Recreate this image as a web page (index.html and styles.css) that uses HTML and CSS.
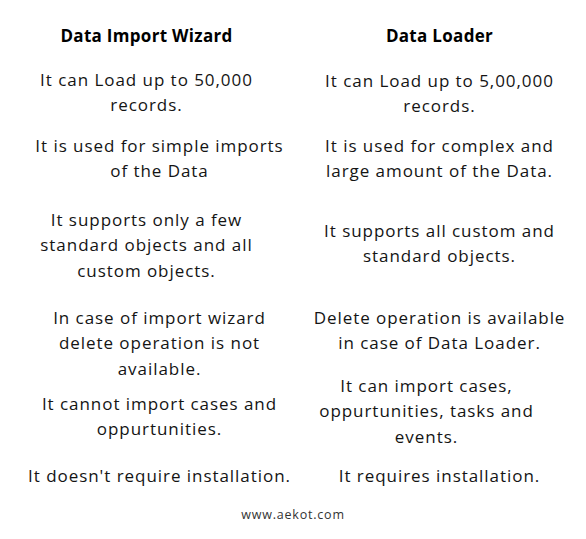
FILE: index.html
```html
<!DOCTYPE html>
<html lang="en">
<head>
<meta charset="utf-8">
<title>Data Import Wizard vs Data Loader</title>
<link rel="stylesheet" href="styles.css">
</head>
<body>
<main class="page">
  <section class="col col-left">
    <h2 class="title">Data Import Wizard</h2>
    <p class="item g-l1">It can Load up to 50,000<br>records.</p>
    <p class="item g-l2 shift-r">It is used for simple imports<br>of the Data</p>
    <p class="item g-l3">It supports only a few<br>standard objects and all<br>custom objects.</p>
    <p class="item g-l4 shift-r">In case of import wizard<br>delete operation is not<br>available.</p>
    <p class="item g-l5 shift-r">It cannot import cases and<br>oppurtunities.</p>
    <p class="item g-l6 shift-r">It doesn't require installation.</p>
  </section>
  <section class="col col-right">
    <h2 class="title">Data Loader</h2>
    <p class="item g-r1">It can Load up to 5,00,000<br>records.</p>
    <p class="item g-r2">It is used for complex and<br>large amount of the Data.</p>
    <p class="item g-r3">It supports all custom and<br>standard objects.</p>
    <p class="item g-r4">Delete operation is available<br>in case of Data Loader.</p>
    <p class="item g-r5 shift-l">It can import cases,<br>oppurtunities, tasks and<br>events.</p>
    <p class="item g-r6">It requires installation.</p>
  </section>
  <footer class="footer">www.aekot.com</footer>
</main>
</body>
</html>
```
FILE: styles.css
```css
* { box-sizing: border-box; }
html, body {
  margin: 0;
  padding: 0;
  background: #ffffff;
}
body {
  width: 586px;
  height: 539px;
  overflow: hidden;
  font-family: "Open Sans", "Noto Sans", sans-serif;
  color: #141414;
}
.page {
  display: grid;
  grid-template-columns: 293px 293px;
  grid-template-rows: auto auto;
  padding-top: 23px;
}
.col {
  display: flex;
  flex-direction: column;
  align-items: center;
  text-align: center;
}
.title {
  margin: 0;
  font-size: 17px;
  line-height: 26px;
  font-weight: 700;
  letter-spacing: 0.3px;
  color: #000;
}
.item {
  margin: 0;
  font-size: 17px;
  line-height: 25.5px;
  letter-spacing: 0.95px;
  white-space: nowrap;
}
.shift-r { padding-left: 26px; }
.shift-l { padding-right: 26px; }

.g-l1 { margin-top: 17.5px; }
.g-l2 { margin-top: 15px; }
.g-l3 { margin-top: 23px; }
.g-l4 { margin-top: 21.5px; }
.g-l5 { margin-top: 9.5px; }
.g-l6 { margin-top: 21px; }

.g-r1 { margin-top: 18.5px; }
.g-r2 { margin-top: 14px; }
.g-r3 { margin-top: 34px; }
.g-r4 { margin-top: 36px; }
.g-r5 { margin-top: 17px; }
.g-r6 { margin-top: 13.5px; }

.footer {
  grid-column: 1 / 3;
  margin-top: 19px;
  text-align: center;
  font-size: 12.5px;
  line-height: 16px;
  color: #333;
  letter-spacing: 0.8px;
}
```
